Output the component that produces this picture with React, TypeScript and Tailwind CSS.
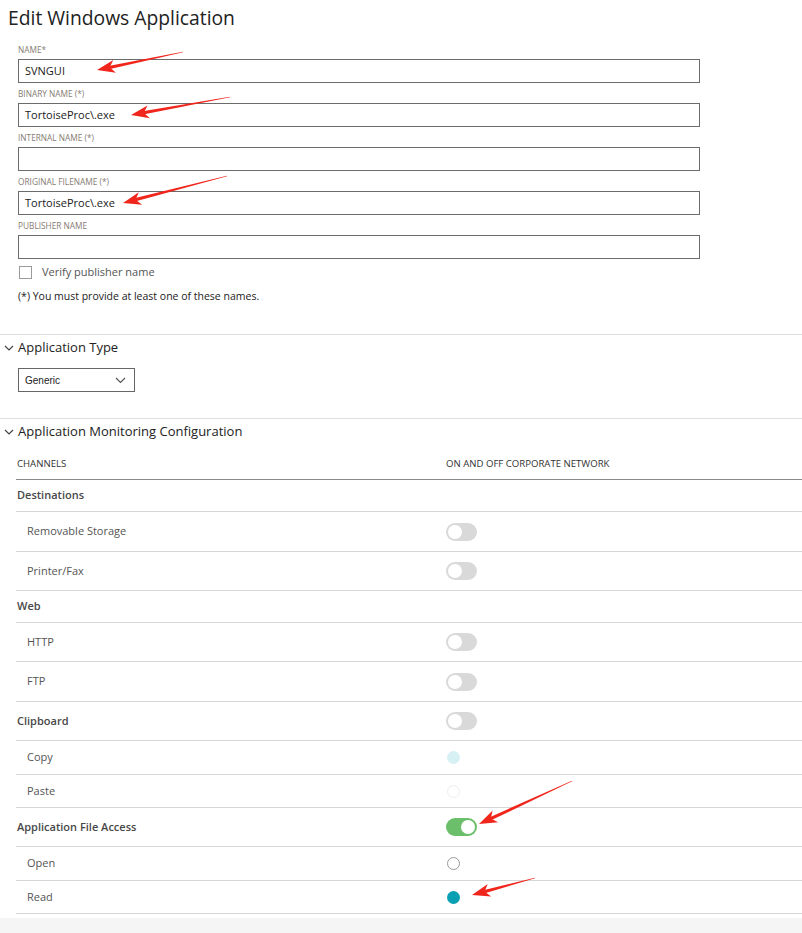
import React from "react";

const font = { fontFamily: '"Open Sans", "Noto Sans", sans-serif' };

function Arrow({ tail, tip }: { tail: [number, number]; tip: [number, number] }) {
  const dx = tip[0] - tail[0];
  const dy = tip[1] - tail[1];
  const len = Math.hypot(dx, dy);
  const ux = dx / len;
  const uy = dy / len;
  const nx = -uy;
  const ny = ux;
  const L = 17;
  const W = 6.5;
  const bx = tip[0] - ux * L;
  const by = tip[1] - uy * L;
  const sx = tip[0] - ux * (L - 5);
  const sy = tip[1] - uy * (L - 5);
  const shaft = [
    [tail[0] + nx * 0.3, tail[1] + ny * 0.3],
    [sx + nx * 1.7, sy + ny * 1.7],
    [sx - nx * 1.7, sy - ny * 1.7],
    [tail[0] - nx * 0.3, tail[1] - ny * 0.3],
  ];
  const head = [
    [tip[0], tip[1]],
    [bx - ux * 1 + nx * W, by - uy * 1 + ny * W],
    [bx + ux * 4, by + uy * 4],
    [bx - ux * 1 - nx * W, by - uy * 1 - ny * W],
  ];
  const p = (a: number[][]) => a.map((q) => `${q[0].toFixed(1)},${q[1].toFixed(1)}`).join(" ");
  return (
    <g fill="#f0261c">
      <polygon points={p(shaft)} />
      <polygon points={p(head)} />
    </g>
  );
}

function Field({ label, value }: { label: string; value?: string }) {
  return (
    <div className="flex flex-col">
      <div className="text-[8.3px] leading-[10px] uppercase text-[#857b72]">{label}</div>
      <div className="mt-[4px] h-[24px] w-[682px] border border-[#6b6b6b] bg-white flex items-center pl-[6px] text-[11px] text-[#1a1a1a]">
        {value}
      </div>
    </div>
  );
}

function Chevron() {
  return (
    <svg width="10" height="6" viewBox="0 0 10 6" className="mr-[4px]">
      <path d="M1 1 L5 5 L9 1" fill="none" stroke="#444" strokeWidth="1.2" />
    </svg>
  );
}

function Toggle({ on }: { on?: boolean }) {
  return (
    <div
      className={
        on
          ? "w-[31px] h-[18px] rounded-full bg-[#6cbf6a] flex items-center justify-end pr-[2px]"
          : "w-[31px] h-[18px] rounded-full bg-[#d9d9d9] flex items-center pl-[2px]"
      }
    >
      <div className="w-[14px] h-[14px] rounded-full bg-white" />
    </div>
  );
}

type Row = {
  label: string;
  group?: boolean;
  h: string;
  ctrl?: React.ReactNode;
};

const rows: Row[] = [
  { label: "Destinations", group: true, h: "h-[32px]" },
  { label: "Removable Storage", h: "h-[40px]", ctrl: <Toggle /> },
  { label: "Printer/Fax", h: "h-[39px]", ctrl: <Toggle /> },
  { label: "Web", group: true, h: "h-[32px]" },
  { label: "HTTP", h: "h-[39px]", ctrl: <Toggle /> },
  { label: "FTP", h: "h-[40px]", ctrl: <Toggle /> },
  { label: "Clipboard", group: true, h: "h-[39px]", ctrl: <Toggle /> },
  {
    label: "Copy",
    h: "h-[34px]",
    ctrl: <div className="w-[13px] h-[13px] rounded-full bg-[#d7f0f4] ml-[1px]" />,
  },
  {
    label: "Paste",
    h: "h-[33px]",
    ctrl: <div className="w-[13px] h-[13px] rounded-full border border-[#eeeeee] ml-[1px]" />,
  },
  { label: "Application File Access", group: true, h: "h-[39px]", ctrl: <Toggle on /> },
  {
    label: "Open",
    h: "h-[34px]",
    ctrl: <div className="w-[13px] h-[13px] rounded-full border border-[#999999] bg-white ml-[1px]" />,
  },
  {
    label: "Read",
    h: "h-[33px]",
    ctrl: <div className="w-[13px] h-[13px] rounded-full bg-[#0aa0b4] ml-[1px]" />,
  },
];

export default function App() {
  return (
    <div className="relative w-[802px] min-h-[933px] bg-[#f5f5f5]" style={font}>
      <div className="bg-white pb-[4px]">
        <div className="pl-[8px] pt-[6px] text-[19.3px] leading-[24px] text-[#222]">Edit Windows Application</div>
        <div className="pl-[18px] mt-[15px] flex flex-col gap-[6px]">
          <Field label="Name*" value="SVNGUI" />
          <Field label="Binary name (*)" value="TortoiseProc\.exe" />
          <Field label="Internal name (*)" />
          <Field label="Original filename (*)" value="TortoiseProc\.exe" />
          <Field label="Publisher name" />
        </div>
        <div className="pl-[19px] mt-[7px] flex items-center h-[13px]">
          <div className="w-[13px] h-[13px] border border-[#9a9a9a] bg-white" />
          <span className="ml-[10px] text-[11px] text-[#555]">Verify publisher name</span>
        </div>
        <div className="pl-[18px] mt-[10px] text-[10.5px] leading-[14px] text-[#222]">
          (*) You must provide at least one of these names.
        </div>
        <div className="mt-[31px] border-t border-[#dedede]" />
        <div className="pl-[4px] mt-[4px] h-[18px] flex items-center text-[13px] text-[#222]">
          <Chevron />
          Application Type
        </div>
        <div className="pl-[18px] mt-[11px]">
          <div className="w-[117px] h-[24px] border border-[#666] flex items-center justify-between pl-[6px] pr-[8px]">
            <span className="text-[10px] text-[#222]" style={{ fontFamily: '"Liberation Sans", Arial, sans-serif' }}>
              Generic
            </span>
            <svg width="11" height="7" viewBox="0 0 11 7">
              <path d="M1 1 L5.5 5.5 L10 1" fill="none" stroke="#555" strokeWidth="1.2" />
            </svg>
          </div>
        </div>
        <div className="mt-[26px] border-t border-[#dedede]" />
        <div className="pl-[4px] mt-[4px] h-[18px] flex items-center text-[13px] text-[#222]">
          <Chevron />
          Application Monitoring Configuration
        </div>
        <div className="ml-[16px] mt-[9px]">
          <div className="flex h-[30px] items-center border-b border-[#8a8a8a] text-[9.6px] text-[#333]">
            <div className="w-[430px] pl-[1px]">CHANNELS</div>
            <div>ON AND OFF CORPORATE NETWORK</div>
          </div>
          {rows.map((r) => (
            <div key={r.label} className={`flex items-center border-b border-[#d6d6d6] ${r.h}`}>
              <div
                className={
                  r.group
                    ? "w-[430px] pl-[1px] text-[11px] font-semibold text-[#484848]"
                    : "w-[430px] pl-[11px] text-[11px] text-[#555]"
                }
              >
                {r.label}
              </div>
              <div className="flex items-center">{r.ctrl}</div>
            </div>
          ))}
        </div>
      </div>
      <svg className="absolute left-0 top-0 pointer-events-none" width="802" height="933">
        <Arrow tail={[183, 52]} tip={[97, 70]} />
        <Arrow tail={[230, 97]} tip={[131, 115]} />
        <Arrow tail={[227, 176]} tip={[123, 203]} />
        <Arrow tail={[572, 781]} tip={[479, 824]} />
        <Arrow tail={[535, 878]} tip={[472, 895]} />
      </svg>
    </div>
  );
}
